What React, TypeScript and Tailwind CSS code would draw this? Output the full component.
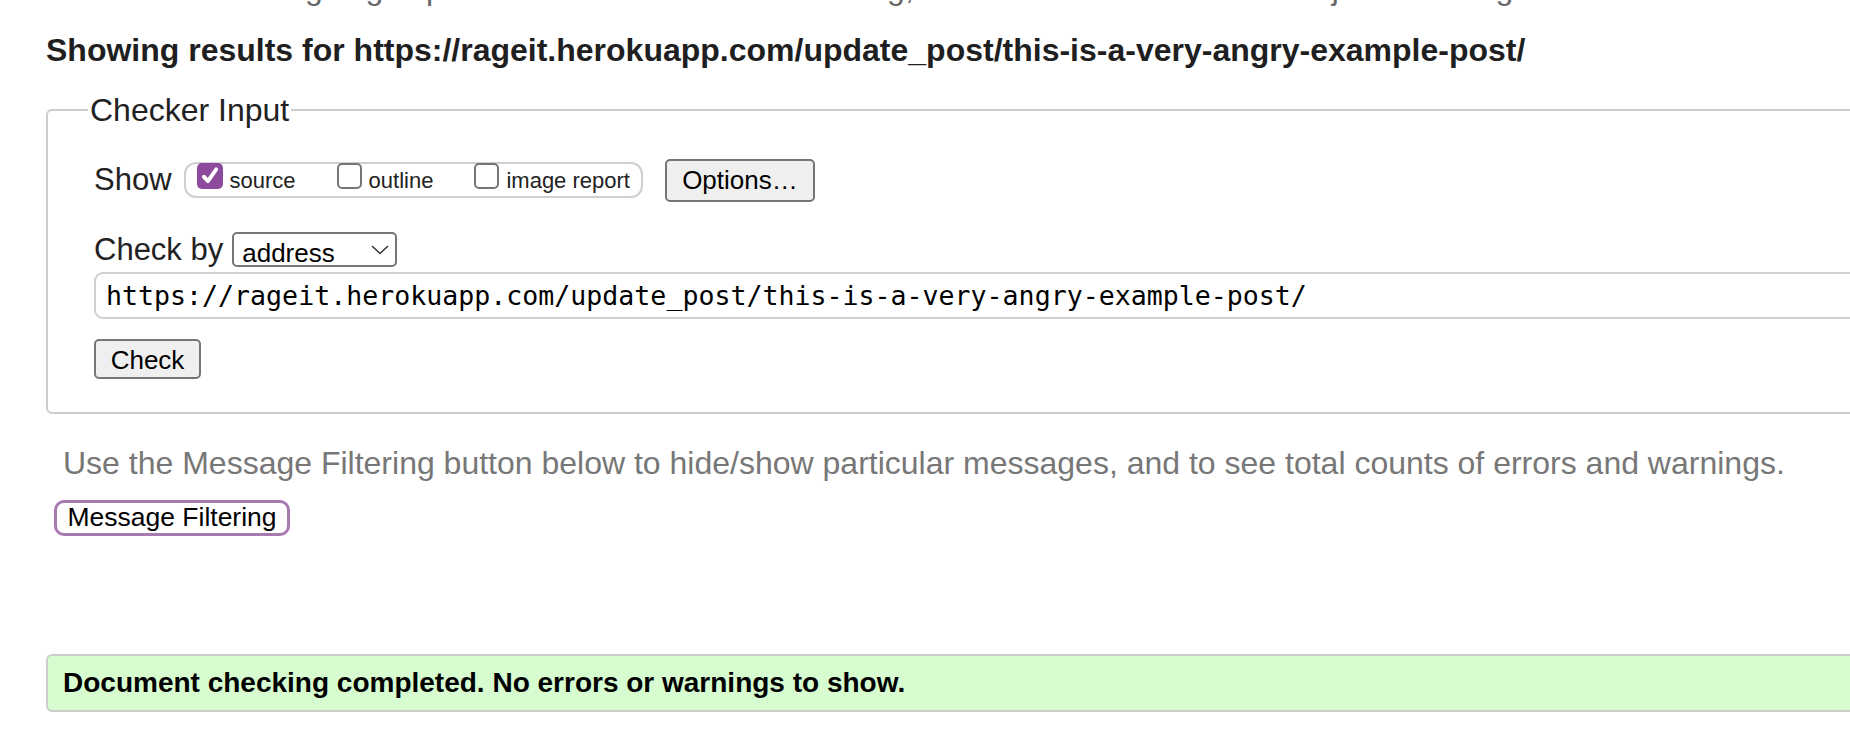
const sans = "font-['Liberation_Sans',Arial,sans-serif]";

const Box = ({ checked, label }: { checked?: boolean; label: string }) => (
  <label className="flex items-start">
    {checked ? (
      <span className="-mt-px flex h-[26px] w-[26px] items-center justify-center rounded-[5px] bg-[#8b4a9b]">
        <svg viewBox="0 0 16 16" className="h-[22px] w-[22px]" fill="none" stroke="white" strokeWidth="2.8" strokeLinecap="round" strokeLinejoin="round">
          <path d="M3.5 8.5l3 3.2 6-8.5" />
        </svg>
      </span>
    ) : (
      <span className="-mt-px h-[26px] w-[25px] rounded-[5px] border-2 border-[#767676] bg-white" />
    )}
    <span className="mt-[4px] ml-[7px] text-[22px] leading-[26px] text-[#222]">{label}</span>
  </label>
);

export default function App() {
  return (
    <div className={`h-[732px] w-full overflow-hidden bg-white ${sans}`}>
      <div className="w-[1950px] pl-[46px]">
        {/* intro paragraph, scrolled nearly out of view */}
        <p className="-mt-[31px] ml-[17px] text-[32px] leading-[38px] text-[#666]">
          This tool is an ongoing experiment in better HTML checking, and its behavior remains subject to change
        </p>

        <h2 className="mt-[24px] text-[32px] leading-[38px] font-bold text-[#1f1f22]">
          Showing results for https://rageit.herokuapp.com/update_post/this-is-a-very-angry-example-post/
        </h2>

        <fieldset className="mt-[23px] rounded-[6px] border-2 border-[#cdcdcd] pr-[46px] pb-[33px] pl-[46px]">
          <legend className="-ml-[6px] px-[2px] text-[32px] leading-[36px] text-[#222]">Checker Input</legend>

          <div className="mt-[29px] flex items-center">
            <span className="text-[31px] text-[#222]">Show</span>
            <div className="ml-[12px] flex h-[36px] items-start rounded-[12px] border-2 border-[#cfcfcf] pr-[11px] pl-[11px]">
              <Box checked label="source" />
              <div className="ml-[41px]">
                <Box label="outline" />
              </div>
              <div className="ml-[41px]">
                <Box label="image report" />
              </div>
            </div>
            <button className="ml-[22px] h-[43px] w-[150px] rounded-[5px] border-2 border-[#767676] bg-[#efefef] text-[26px] text-black">
              Options…
            </button>
          </div>

          <div className="mt-[28px] flex items-center">
            <span className="text-[31px] leading-[36px] text-[#222]">Check by</span>
            <div className="relative ml-[9px]">
              <select className="block h-[35px] w-[165px] appearance-none rounded-[5px] border-2 border-[#767676] bg-white pl-[8px] text-[26px] text-black">
                <option>address</option>
              </select>
              <svg viewBox="0 0 18 10" className="pointer-events-none absolute top-[13px] right-[8px] h-[10px] w-[18px]" fill="none" stroke="#333" strokeWidth="1.5" strokeLinecap="round" strokeLinejoin="round">
                <path d="M1.5 1.5l7.5 7 7.5-7" />
              </svg>
            </div>
          </div>

          <input
            readOnly
            value="https://rageit.herokuapp.com/update_post/this-is-a-very-angry-example-post/"
            className="mt-[4px] block h-[47px] w-full rounded-[9px] border-2 border-[#cfcfcf] bg-white pl-[10px] font-['DejaVu_Sans_Mono',monospace] text-[26.6px] text-black outline-none"
          />

          <button className="mt-[20px] block h-[40px] w-[107px] rounded-[5px] border-2 border-[#767676] bg-[#efefef] text-[26px] text-black">
            Check
          </button>
        </fieldset>

        <p className="mt-[30px] ml-[17px] text-[32px] leading-[38px] text-[#777]">
          Use the Message Filtering button below to hide/show particular messages, and to see total counts of errors and warnings.
        </p>

        <button className="mt-[18px] ml-[8px] block h-[36px] w-[236px] rounded-[10px] border-[3px] border-[#a87bb0] bg-white text-[26.5px] leading-none text-black">
          Message Filtering
        </button>

        <div className="mt-[118px] flex h-[58px] items-center rounded-[6px] border-2 border-[#cdcdcd] bg-[#d6fcd0] pl-[15px]">
          <p className="text-[28px] font-bold text-black">Document checking completed. No errors or warnings to show.</p>
        </div>
      </div>
    </div>
  );
}
